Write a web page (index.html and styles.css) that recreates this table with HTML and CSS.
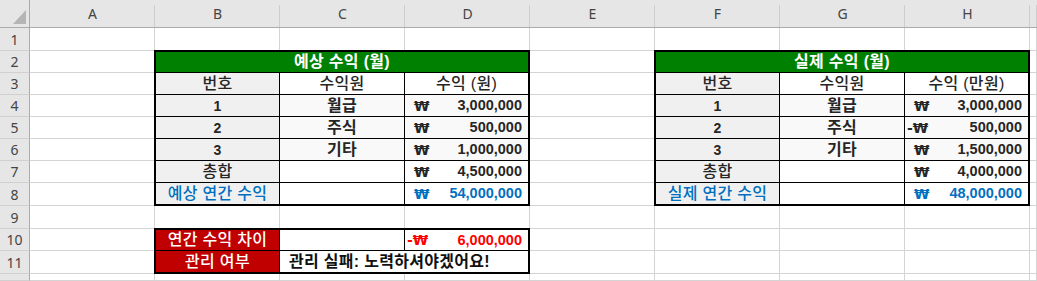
FILE: index.html
```html
<!DOCTYPE html>
<html lang="ko">
<head>
<meta charset="utf-8">
<title>수익 비교</title>
<link rel="stylesheet" href="styles.css">
</head>
<body>
<div class="sheet">
  <!-- header row -->
  <div class="corner"><svg width="29" height="27" viewBox="0 0 29 27"><polygon points="13,24 26,24 26,10" fill="#b5b5b5"/></svg></div>
  <div class="hd">A</div><div class="hd">B</div><div class="hd">C</div><div class="hd">D</div>
  <div class="hd">E</div><div class="hd">F</div><div class="hd">G</div><div class="hd">H</div><div class="hd"></div>

  <!-- row 1 -->
  <div class="rh">1</div><div class="cell"></div><div class="cell"></div><div class="cell"></div><div class="cell"></div>
  <div class="cell"></div><div class="cell"></div><div class="cell"></div><div class="cell"></div><div class="cell"></div>
  <!-- rows 2-8 -->
  <div class="rh">2</div><div class="cell"></div><div class="cell"></div><div class="cell"></div>
  <div class="rh">3</div><div class="cell"></div><div class="cell"></div><div class="cell"></div>
  <div class="rh">4</div><div class="cell"></div><div class="cell"></div><div class="cell"></div>
  <div class="rh">5</div><div class="cell"></div><div class="cell"></div><div class="cell"></div>
  <div class="rh">6</div><div class="cell"></div><div class="cell"></div><div class="cell"></div>
  <div class="rh">7</div><div class="cell"></div><div class="cell"></div><div class="cell"></div>
  <div class="rh">8</div><div class="cell"></div><div class="cell"></div><div class="cell"></div>
  <!-- row 9 -->
  <div class="rh">9</div><div class="cell"></div><div class="cell"></div><div class="cell"></div><div class="cell"></div>
  <div class="cell"></div><div class="cell"></div><div class="cell"></div><div class="cell"></div><div class="cell"></div>
  <!-- rows 10-11 -->
  <div class="rh">10</div><div class="cell"></div><div class="cell"></div><div class="cell"></div><div class="cell"></div><div class="cell"></div><div class="cell"></div>
  <div class="rh">11</div><div class="cell"></div><div class="cell"></div><div class="cell"></div><div class="cell"></div><div class="cell"></div><div class="cell"></div>
  <!-- row 12 (only its top sliver is visible) -->
  <div class="rh"></div><div class="cell"></div><div class="cell"></div><div class="cell"></div><div class="cell"></div>
  <div class="cell"></div><div class="cell"></div><div class="cell"></div><div class="cell"></div><div class="cell"></div>

  <!-- table: expected -->
  <div class="tbl t-main t-left">
    <div class="c title ko">예상 수익 (월)</div>
    <div class="c gray ko">번호</div><div class="c ko">수익원</div><div class="c ko">수익 (원)</div>
    <div class="c gray b">1</div><div class="c soft ko b">월급</div><div class="c soft acct"><span class="won">₩</span><span>3,000,000</span></div>
    <div class="c gray b">2</div><div class="c soft ko b">주식</div><div class="c soft acct"><span class="won">₩</span><span>500,000</span></div>
    <div class="c gray b">3</div><div class="c soft ko b">기타</div><div class="c soft acct"><span class="won">₩</span><span>1,000,000</span></div>
    <div class="c gray ko">총합</div><div class="c"></div><div class="c acct"><span class="won">₩</span><span>4,500,000</span></div>
    <div class="c gray ko blue">예상 연간 수익</div><div class="c"></div><div class="c acct blue"><span class="won">₩</span><span>54,000,000</span></div>
  </div>

  <!-- table: actual -->
  <div class="tbl t-main t-right">
    <div class="c title ko">실제 수익 (월)</div>
    <div class="c gray ko">번호</div><div class="c ko">수익원</div><div class="c ko">수익 (만원)</div>
    <div class="c gray b">1</div><div class="c soft ko b">월급</div><div class="c soft acct"><span class="won">₩</span><span>3,000,000</span></div>
    <div class="c gray b">2</div><div class="c soft ko b">주식</div><div class="c soft acct neg"><span class="won">-₩</span><span>500,000</span></div>
    <div class="c gray b">3</div><div class="c soft ko b">기타</div><div class="c soft acct"><span class="won">₩</span><span>1,500,000</span></div>
    <div class="c gray ko">총합</div><div class="c"></div><div class="c acct"><span class="won">₩</span><span>4,000,000</span></div>
    <div class="c gray ko blue">실제 연간 수익</div><div class="c"></div><div class="c acct blue"><span class="won">₩</span><span>48,000,000</span></div>
  </div>

  <!-- table: difference -->
  <div class="tbl t-diff">
    <div class="c redbg ko">연간 수익 차이</div><div class="c"></div><div class="c acct neg red"><span class="won">-₩</span><span>6,000,000</span></div>
    <div class="c redbg ko">관리 여부</div><div class="c msg ko">관리 실패: 노력하셔야겠어요!</div>
  </div>
</div>
</body>
</html>
```

FILE: styles.css
```css
* {
  box-sizing: border-box;
  margin: 0;
  padding: 0;
}

body {
  margin: 0;
  background: #ffffff;
  font-family: "Liberation Sans", "Noto Sans CJK KR", sans-serif;
  font-size: 14px;
  color: #262626;
}

.sheet {
  display: grid;
  width: 1037px;
  height: 281px;
  overflow: hidden;
  grid-template-columns: 30px repeat(8, 125px) 1fr;
  grid-template-rows: 28px 23px 22px 22px 22px 22px 22px 22px 23px 23px 22px 23px 1fr;
}

.cell {
  border-right: 1px solid #d4d4d4;
  border-bottom: 1px solid #d4d4d4;
}

.corner {
  background: #e6e6e6;
  border-right: 1px solid #ababab;
  border-bottom: 1px solid #ababab;
}

.corner svg {
  display: block;
}

.hd {
  background: #e6e6e6 linear-gradient(#cdcdcd, #cdcdcd) no-repeat right 0 top 5px / 1px 100%;
  border-bottom: 1px solid #ababab;
  display: flex;
  align-items: center;
  justify-content: center;
  color: #444444;
  font-family: "Noto Sans", "Liberation Sans", sans-serif;
  font-size: 14px;
}

.rh {
  background: #e6e6e6;
  border-right: 1px solid #ababab;
  border-bottom: 1px solid #d0d0d0;
  display: flex;
  align-items: center;
  justify-content: center;
  color: #444444;
  font-family: "Noto Sans", "Liberation Sans", sans-serif;
  font-size: 14px;
}

.tbl {
  margin: -1px 0 0 -1px;
  border: 2px solid #000000;
  background: #000000;
  display: grid;
  gap: 1px;
  grid-template-columns: 123px 124px 123px;
}

.t-main {
  grid-row: 3 / 10;
  grid-template-rows: 20px repeat(6, 21px);
}

.t-left {
  grid-column: 3 / 6;
}

.t-right {
  grid-column: 7 / 10;
}

.t-diff {
  grid-column: 3 / 6;
  grid-row: 11 / 13;
  grid-template-rows: 20px 21px;
}

.c {
  background: #ffffff;
  display: flex;
  align-items: center;
  justify-content: center;
  white-space: nowrap;
  overflow: hidden;
  line-height: 1;
}

.ko {
  font-size: 16px;
  font-weight: 500;
  letter-spacing: 0.3px;
}

.title {
  grid-column: 1 / -1;
  background: #008000;
  color: #ffffff;
  font-weight: bold;
}

.gray {
  background: #f0f0f0;
}

.soft {
  background: #f9f9f9;
}

.b {
  font-weight: bold;
}

.acct {
  justify-content: space-between;
  padding: 0 6px 0 9px;
  font-weight: bold;
  font-size: 14.5px;
}

.acct.neg {
  padding-left: 2px;
}

.won {
  font-family: "DejaVu Sans", "Liberation Sans", sans-serif;
  font-size: 14px;
}

.blue {
  color: #0070c0;
}

.red {
  color: #ff0000;
}

.redbg {
  background: #c00000;
  color: #ffffff;
}

.msg {
  grid-column: 2 / -1;
  justify-content: flex-start;
  padding-left: 9px;
  font-weight: bold;
  color: #111111;
}
```
